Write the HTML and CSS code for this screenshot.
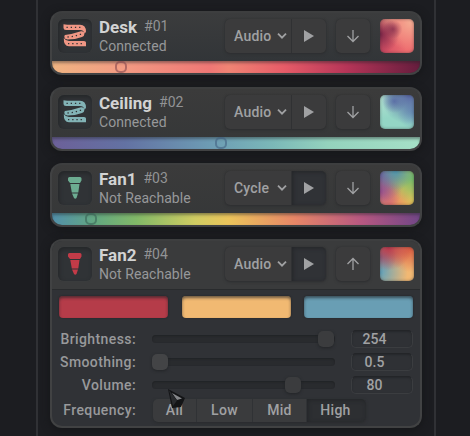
FILE: index.html
```html
<!DOCTYPE html>
<html lang="en">
<head>
<meta charset="utf-8">
<title>Lights</title>
<link rel="stylesheet" href="styles.css">
</head>
<body>
<svg class="defs" width="0" height="0">
  <symbol id="strip" viewBox="0 0 24 24">
    <path d="M.5 .3Q3 1 6 .7H17Q23 1 23 7.500Q22.500 9 21.500 9.300Q20.500 6 17 6H3Q.5 6 .5 4ZM2 11Q10 10 18 7.300Q21 7 21.500 9.500Q21.500 12 19 13Q12 15.500 4.500 15.500Q1.500 15 1.300 13Q1.300 11.500 2 11ZM.8 14Q2.500 16.700 6 17H21Q23 17 23 18.500V22.300H6Q.5 22 .8 14Z" fill="currentColor"/>
    <path d="M3.500 3.400H20M4.500 13Q12 12.500 19.500 9.500M5 19.700H21" fill="none" stroke="#303336" stroke-width="1.300" stroke-dasharray="1.300 2.900"/>
  </symbol>
  <symbol id="spot" viewBox="0 0 24 24">
    <path d="M6.500 1H17Q18.500 1 18.500 2.500V4.500L17 7H7L5 4.500V2.500Q5 1 6.500 1ZM7.300 8H16.500L15.300 16.500H8.800ZM9 17.500H15L13.500 22Q12.200 23.500 11 22Z" fill="currentColor"/>
  </symbol>
  <symbol id="chev" viewBox="0 0 10 8"><path d="M1 1.700 5 5.700 9 1.700" fill="none" stroke="currentColor" stroke-width="1.800"/></symbol>
  <symbol id="play" viewBox="0 0 12 12"><path d="M1 0 11 6 1 12Z" fill="currentColor"/></symbol>
  <symbol id="down" viewBox="0 0 14 14"><path d="M7 1V12.500M1.500 7 7 12.500 12.500 7" fill="none" stroke="currentColor" stroke-width="1.300"/></symbol>
  <symbol id="up" viewBox="0 0 14 14"><path d="M7 13V1.500M1.500 7 7 1.500 12.500 7" fill="none" stroke="currentColor" stroke-width="1.300"/></symbol>
</svg>
<main class="panel">
  <section class="card desk">
    <header class="head">
      <div class="icon"><svg><use href="#strip"/></svg></div>
      <div class="info"><div class="title"><b>Desk</b><span>#01</span></div><div class="state">Connected</div></div>
      <div class="mode"><div class="select">Audio<svg><use href="#chev"/></svg></div><div class="play"><svg><use href="#play"/></svg></div></div>
      <div class="toggle"><svg><use href="#down"/></svg></div>
      <div class="swatch"></div>
    </header>
    <div class="bar"><i class="knob"></i></div>
  </section>
  <section class="card ceiling">
    <header class="head">
      <div class="icon"><svg><use href="#strip"/></svg></div>
      <div class="info"><div class="title"><b>Ceiling</b><span>#02</span></div><div class="state">Connected</div></div>
      <div class="mode"><div class="select">Audio<svg><use href="#chev"/></svg></div><div class="play"><svg><use href="#play"/></svg></div></div>
      <div class="toggle"><svg><use href="#down"/></svg></div>
      <div class="swatch"></div>
    </header>
    <div class="bar"><i class="knob"></i></div>
  </section>
  <section class="card fan1">
    <header class="head">
      <div class="icon"><svg><use href="#spot"/></svg></div>
      <div class="info"><div class="title"><b>Fan1</b><span>#03</span></div><div class="state">Not Reachable</div></div>
      <div class="mode"><div class="select">Cycle<svg><use href="#chev"/></svg></div><div class="play on"><svg><use href="#play"/></svg></div></div>
      <div class="toggle"><svg><use href="#down"/></svg></div>
      <div class="swatch"></div>
    </header>
    <div class="bar"><i class="knob"></i></div>
  </section>
  <section class="card fan2">
    <header class="head">
      <div class="icon"><svg><use href="#spot"/></svg></div>
      <div class="info"><div class="title"><b>Fan2</b><span>#04</span></div><div class="state">Not Reachable</div></div>
      <div class="mode"><div class="select">Audio<svg><use href="#chev"/></svg></div><div class="play on"><svg><use href="#play"/></svg></div></div>
      <div class="toggle"><svg><use href="#up"/></svg></div>
      <div class="swatch"></div>
    </header>
    <div class="body">
      <div class="colors"><div class="red"></div><div class="amber"></div><div class="blue"></div></div>
      <div class="row"><label>Brightness:</label><div class="track bright"><i></i></div><div class="num">254</div></div>
      <div class="row"><label>Smoothing:</label><div class="track smooth"><i></i></div><div class="num">0.5</div></div>
      <div class="row"><label>Volume:</label><div class="track volume"><i></i></div><div class="num">80</div></div>
      <div class="row freq"><label>Frequency:</label><div class="tabs"><div class="all">All</div><div class="low">Low</div><div class="mid">Mid</div><div class="high">High</div></div></div>
    </div>
  </section>
</main>
<svg class="cursor" viewBox="0 0 20 22"><path d="M1 1 18 10 14 19 5 20Z" fill="#131416"/><path d="M5 5 15 10.500 10 12Z" fill="#85878a"/><path d="M2 2 10 12.500 6 18Z" fill="#292b2e"/></svg>
</body>
</html>
```
FILE: styles.css
```css
* { box-sizing: border-box; }
body {
  margin: 0;
  height: 436px;
  overflow: hidden;
  background: #1c1d21;
  font-family: Roboto, "Liberation Sans", sans-serif;
  color: #a0a1a3;
}
.defs { position: absolute; }
.panel {
  width: 400px;
  height: 450px;
  margin-left: 36px;
  padding: 11px 12px 0;
  border: solid #303135;
  border-width: 0 2px;
  display: flex;
  flex-direction: column;
  gap: 12px;
}
.card {
  height: 64px;
  flex: none;
  border: 2px solid #414243;
  border-top-color: #3d3e3f;
  border-radius: 12px;
  overflow: hidden;
  background: linear-gradient(#3b3c3d, #323538 80%);
}
.ceiling, .fan1 { background: linear-gradient(#3b3b3b, #353738); }
.card.fan2 { height: 189px; background: #303236; }
.card { box-shadow: 0 2px 9px #151618; }
.head { height: 48px; padding: 6px 5px 0 6px; display: flex; }
.head > * { flex: none; }
.fan2 .head { height: 49px; background: #3a3b3c; border-bottom: 1px solid #292b2d; }
.icon {
  width: 34px;
  height: 34px;
  border-radius: 6px;
  background: #303336;
  box-shadow: inset 1px 2px 4px #242628, 0 0 1px #44464a;
  display: flex;
  align-items: center;
  justify-content: center;
}
.icon svg { width: 24px; height: 24px; }
.desk .icon { color: #ef9684; }
.ceiling .icon { color: #82b3b6; }
.fan1 .icon { color: #6cac91; }
.fan2 .icon { color: #c33b48; }
.info { width: 133px; padding-left: 7px; }
.title { height: 18px; display: flex; line-height: 17px; }
.title b { font-size: 17px; font-weight: 700; color: #d2d3d3; }
.title span { font-size: 14px; line-height: 15px; margin-left: 7px; color: #929395; }
.state { font-size: 14px; line-height: 19px; letter-spacing: .05px; color: #97989a; white-space: nowrap; }
.mode {
  display: flex;
  width: 101px;
  height: 34px;
  border-radius: 5px;
  background: #3b3b3c;
  box-shadow: 0 1px 3px #2d2e30, 0 0 1px #292a2c;
}
.select {
  width: 67px;
  padding: 0 4px 0 9px;
  border-right: 1px solid #303133;
  display: flex;
  align-items: center;
  justify-content: space-between;
  font-size: 14px;
  font-weight: 500;
  letter-spacing: .2px;
}
.select svg { width: 10px; height: 8px; }
.play, .toggle { display: flex; align-items: center; justify-content: center; }
.play { width: 34px; border-radius: 0 5px 5px 0; }
.play.on { background: #303236; box-shadow: inset 1px 1px 4px #242629; }
.play svg { width: 12px; height: 12px; }
.toggle {
  width: 34px;
  height: 34px;
  margin-left: 10px;
  border-radius: 5px;
  background: #3b3b3c;
  box-shadow: 0 1px 3px #2d2e30, 0 0 1px #292a2c;
}
.toggle svg { width: 14px; height: 14px; }
.swatch { width: 34px; height: 34px; margin-left: 10px; border-radius: 5px; box-shadow: inset 0 0 3px #20202680; }
.desk .swatch {
  background:
    radial-gradient(circle at 0 45%, #7a2548, #7a254800 50%),
    radial-gradient(circle at 38% 30%, #9f4258, #9f425800 30%),
    radial-gradient(circle at 90% 10%, #f5ab92, #f5ab9200 65%),
    radial-gradient(circle at 20% 0, #ef9686, #ef968600 35%),
    radial-gradient(circle at 0 100%, #cf4862, #cf486200 55%),
    #ee6e70;
}
.ceiling .swatch {
  background:
    radial-gradient(circle at 85% 0, #5865a3, #5865a300 65%),
    radial-gradient(circle at 42% 18%, #5f79a8, #5f79a800 35%),
    radial-gradient(circle at 100% 50%, #6f9fbd, #6f9fbd00 45%),
    radial-gradient(circle at 0 0, #b5e3d2, #b5e3d200 50%),
    #94d6c5;
}
.fan1 .swatch {
  background:
    radial-gradient(circle at 45% 0, #4e95b0, #4e95b000 50%),
    radial-gradient(circle at 100% 20%, #6fba6b, #6fba6b00 60%),
    radial-gradient(circle at 0 10%, #70559b, #70559b00 60%),
    radial-gradient(circle at 0 60%, #b04c88, #b04c8800 55%),
    radial-gradient(circle at 30% 100%, #ea7d68, #ea7d6800 55%),
    #e6c458;
}
.fan2 .swatch {
  background:
    radial-gradient(circle at 25% 0, #b8364c, #b8364c00 55%),
    radial-gradient(circle at 90% 0, #d9583f, #d9583f00 55%),
    radial-gradient(circle at 0 75%, #62a3bc, #62a3bc00 65%),
    radial-gradient(circle at 0 30%, #80567f, #80567f00 40%),
    #f1b873;
}
.bar { position: relative; height: 12px; box-shadow: inset 0 2px 3px #22242670; }
.desk .bar { background: linear-gradient(90deg, #efb482, #f39a83 20%, #ef7775 43%, #f08474 48%, #e65c68 63%, #b63558 80%, #651d3d); }
.ceiling .bar { background: linear-gradient(90deg, #6c6099, #6372a3 20%, #6d9cb4 43%, #7bb8b8 60%, #94d2bd 75%, #a5e0c7); }
.fan1 .bar { background: linear-gradient(90deg, #528faa, #64a880 12%, #82b968 23%, #d0cc62 39%, #ebc45b 48%, #e78667 66%, #b75881 84%, #714687); }
.knob { position: absolute; top: 0; width: 12px; height: 12px; border: 2px solid #463a4280; border-radius: 5px; }
.desk .knob { left: 63px; border-color: #85484f99; }
.ceiling .knob { left: 163px; border-color: #405d8090; }
.fan1 .knob { left: 33px; border-color: #37605390; }
.body { padding: 6px 7px 0; }
.colors { display: grid; grid-template-columns: repeat(3, 109px); justify-content: space-between; height: 22px; margin-bottom: 9px; }
.colors div { border-radius: 4px; box-shadow: inset 0 2px 3px #202226a0, 0 0 2px #202226; }
.red { background: #b53c49; }
.amber { background: #f1b972; }
.blue { background: #699eb4; }
.row { height: 23px; display: flex; align-items: center; }
.row label { width: 77px; text-align: right; font-size: 14px; font-weight: 500; letter-spacing: .4px; white-space: nowrap; flex: none; color: #98999b; }
.track { width: 183px; height: 8px; margin-left: 16px; border-radius: 4px; background: #292b2e; box-shadow: inset 0 1px 2px #202225; display: flex; align-items: center; }
.track i { width: 16px; height: 16px; border-radius: 5px; background: #3b3c3e; box-shadow: 0 1px 3px #222427; }
.bright i { margin-left: 166px; }
.smooth i { margin-left: 0; background: #434446; }
.volume i { margin-left: 133px; }
.num { width: 62px; height: 18px; margin-left: 16px; padding-right: 15px; border: 1px solid #3b3d40; border-top-color: #232528; border-radius: 5px; background: #2f3135; box-shadow: inset 0 1px 2px #25272a; font-size: 14px; line-height: 16px; font-weight: 500; text-align: center; }
.freq { height: 24px; margin-top: 2px; }
.tabs { display: flex; margin-left: 17px; height: 23px; border-radius: 5px; background: #3a3b3d; box-shadow: 0 1px 3px #292b2d; font-size: 14px; font-weight: 500; line-height: 23px; letter-spacing: .3px; text-align: center; }
.tabs div { border-right: 1px solid #303235; }
.all { width: 44px; }
.low { width: 56px; }
.mid { width: 54px; }
.tabs .high { width: 59px; padding-right: 2px; border: 0; border-radius: 0 5px 5px 0; background: #2d2f32; box-shadow: inset 1px 1px 4px #222427; }
.cursor { position: absolute; left: 167px; top: 388px; width: 20px; height: 22px; }
```
